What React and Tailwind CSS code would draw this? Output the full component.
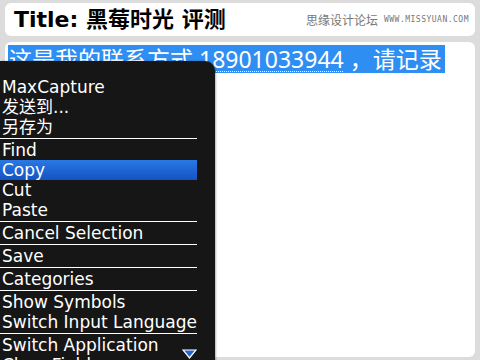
import React from 'react';

const menu = [
    { label: 'MaxCapture' },
    { label: '发送到...' },
    { label: '另存为', sep: true },
    { label: 'Find' },
    { label: 'Copy', active: true },
    { label: 'Cut' },
    { label: 'Paste', sep: true },
    { label: 'Cancel Selection', sep: true },
    { label: 'Save', sep: true },
    { label: 'Categories', sep: true },
    { label: 'Show Symbols' },
    { label: 'Switch Input Language', sep: true },
    { label: 'Switch Application' },
    { label: 'Clear Field' },
];

export default function App() {
    return (
        <div className="relative h-[360px] w-[480px] overflow-hidden bg-[#dcdcdc] pt-[3px] font-['DejaVu_Sans','Noto_Sans_CJK_SC',sans-serif]">
            {/* Title bar */}
            <div className="mx-[5px] flex h-[33px] items-center justify-between rounded-[6px] bg-white pl-[9px] pr-[6px]">
                <span className="text-[22px] font-bold leading-none text-black">Title: 黑莓时光 评测</span>
                <div className="flex items-center gap-[6px] text-[#777]">
                    <span className="text-[12px] font-['Noto_Sans_CJK_SC',sans-serif]">思缘设计论坛</span>
                    <span className="text-[8px] tracking-[0.5px] font-['DejaVu_Sans_Mono',monospace]">WWW.MISSYUAN.COM</span>
                </div>
            </div>

            {/* Message body */}
            <div className="mx-[5px] mt-[6px] h-[315px] rounded-[6px] bg-white pl-[3px] pt-[3px]">
                <div className="inline-flex h-[28px] items-center bg-[#2f8ef2] pl-[1px] pr-[3px] text-[23px] leading-none text-white font-['Noto_Sans','Noto_Sans_CJK_SC',sans-serif]">
                    <span>这是我的联系方式&nbsp;</span>
                    <span className="underline decoration-dotted decoration-1 underline-offset-[3px]">18901033944</span>
                    <span>&nbsp;，请记录</span>
                </div>
            </div>

            {/* Context menu */}
            <div className="absolute left-0 top-[61px] h-[310px] w-[215px] overflow-hidden rounded-tr-[10px] bg-[#161616] pt-[16px] shadow-[1px_0_2px_rgba(0,0,0,0.3)]">
                {menu.map((item) => (
                    <div key={item.label} className="w-[197px]">
                        <div className={`flex h-[20px] items-center whitespace-nowrap pl-[2px] text-[17px] leading-none text-white ${item.active ? 'bg-gradient-to-b from-[#2a78e4] to-[#1553c2]' : ''}`}>
                            {item.label}
                        </div>
                        {item.sep && (
                            <div className="flex h-[3px] items-center">
                                <div className="h-px w-full bg-white" />
                            </div>
                        )}
                    </div>
                ))}
                <svg className="absolute left-[182px] top-[288px]" width="15" height="10" viewBox="0 0 15 10">
                    <polygon points="1,1 14,1 7.5,9" fill="#2a66c8" stroke="#ffffff" strokeWidth="1.2" />
                </svg>
            </div>
        </div>
    );
}
